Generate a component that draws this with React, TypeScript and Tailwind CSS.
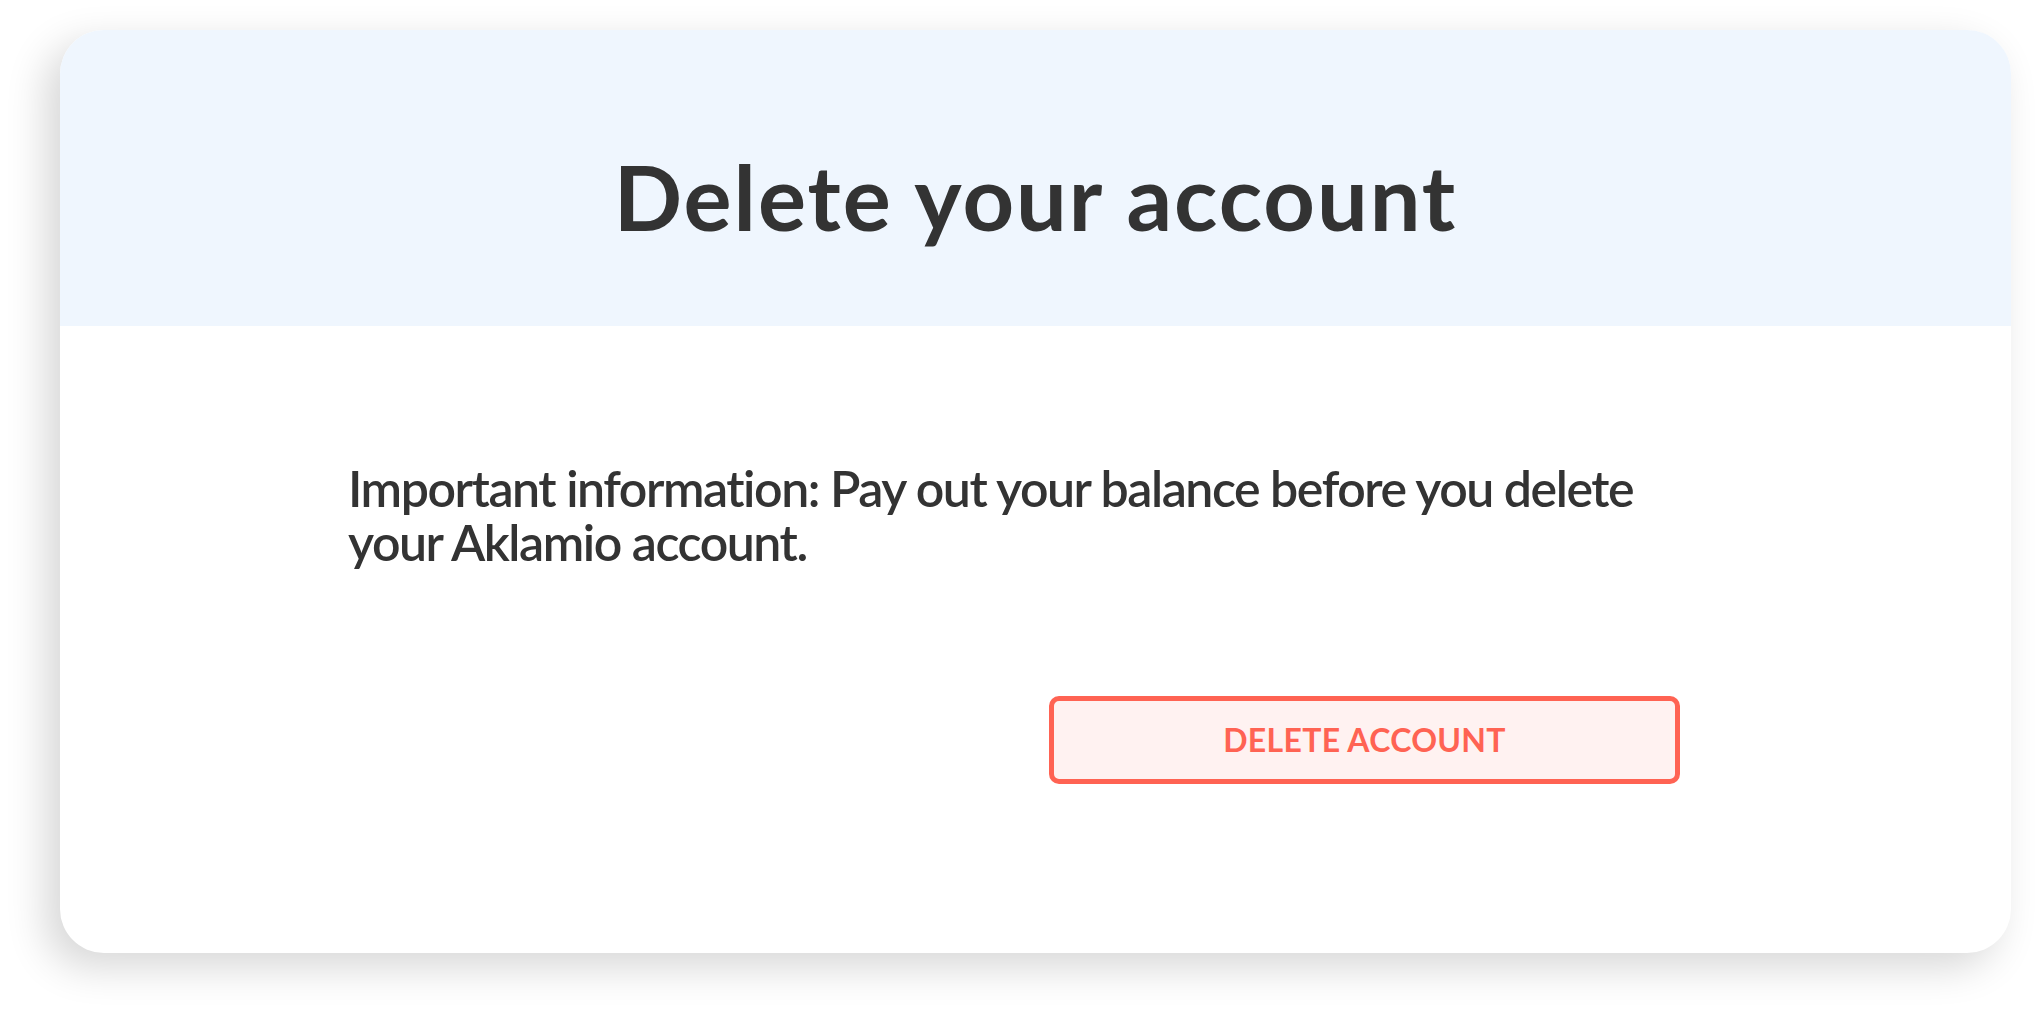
export default function App() {
  return (
    <div className="min-h-screen w-full bg-white pt-[30px] pl-[60px] font-['Lato',sans-serif] text-[#333333] [font-variant-ligatures:none]">
      <div className="w-[1951px] h-[923px] rounded-[44px] overflow-hidden bg-white shadow-[-14px_14px_40px_rgba(0,0,0,0.16)] flex flex-col">
        <div className="h-[296px] shrink-0 bg-[#eff6fe] pt-[121px]">
          <h1 className="text-center text-[90px] leading-none font-bold tracking-[2px]">
            Delete your account
          </h1>
        </div>

        <div className="flex-1 pt-[135px] pl-[288px]">
          <div className="w-[1332px] flex flex-col">
            <p className="w-[1300px] text-[50px] leading-[54px] font-semibold tracking-[-1.45px]">
              Important information: Pay out your balance before you delete your
              Aklamio account.
            </p>

            <div className="flex justify-end mt-[127px]">
              <button
                type="button"
                className="w-[631px] h-[88px] rounded-[10px] border-[5px] border-[#ff6353] bg-[#fff2f1] text-[#ff6353] text-[32px] font-bold tracking-[0.3px]"
              >
                DELETE ACCOUNT
              </button>
            </div>
          </div>
        </div>
      </div>
    </div>
  );
}
